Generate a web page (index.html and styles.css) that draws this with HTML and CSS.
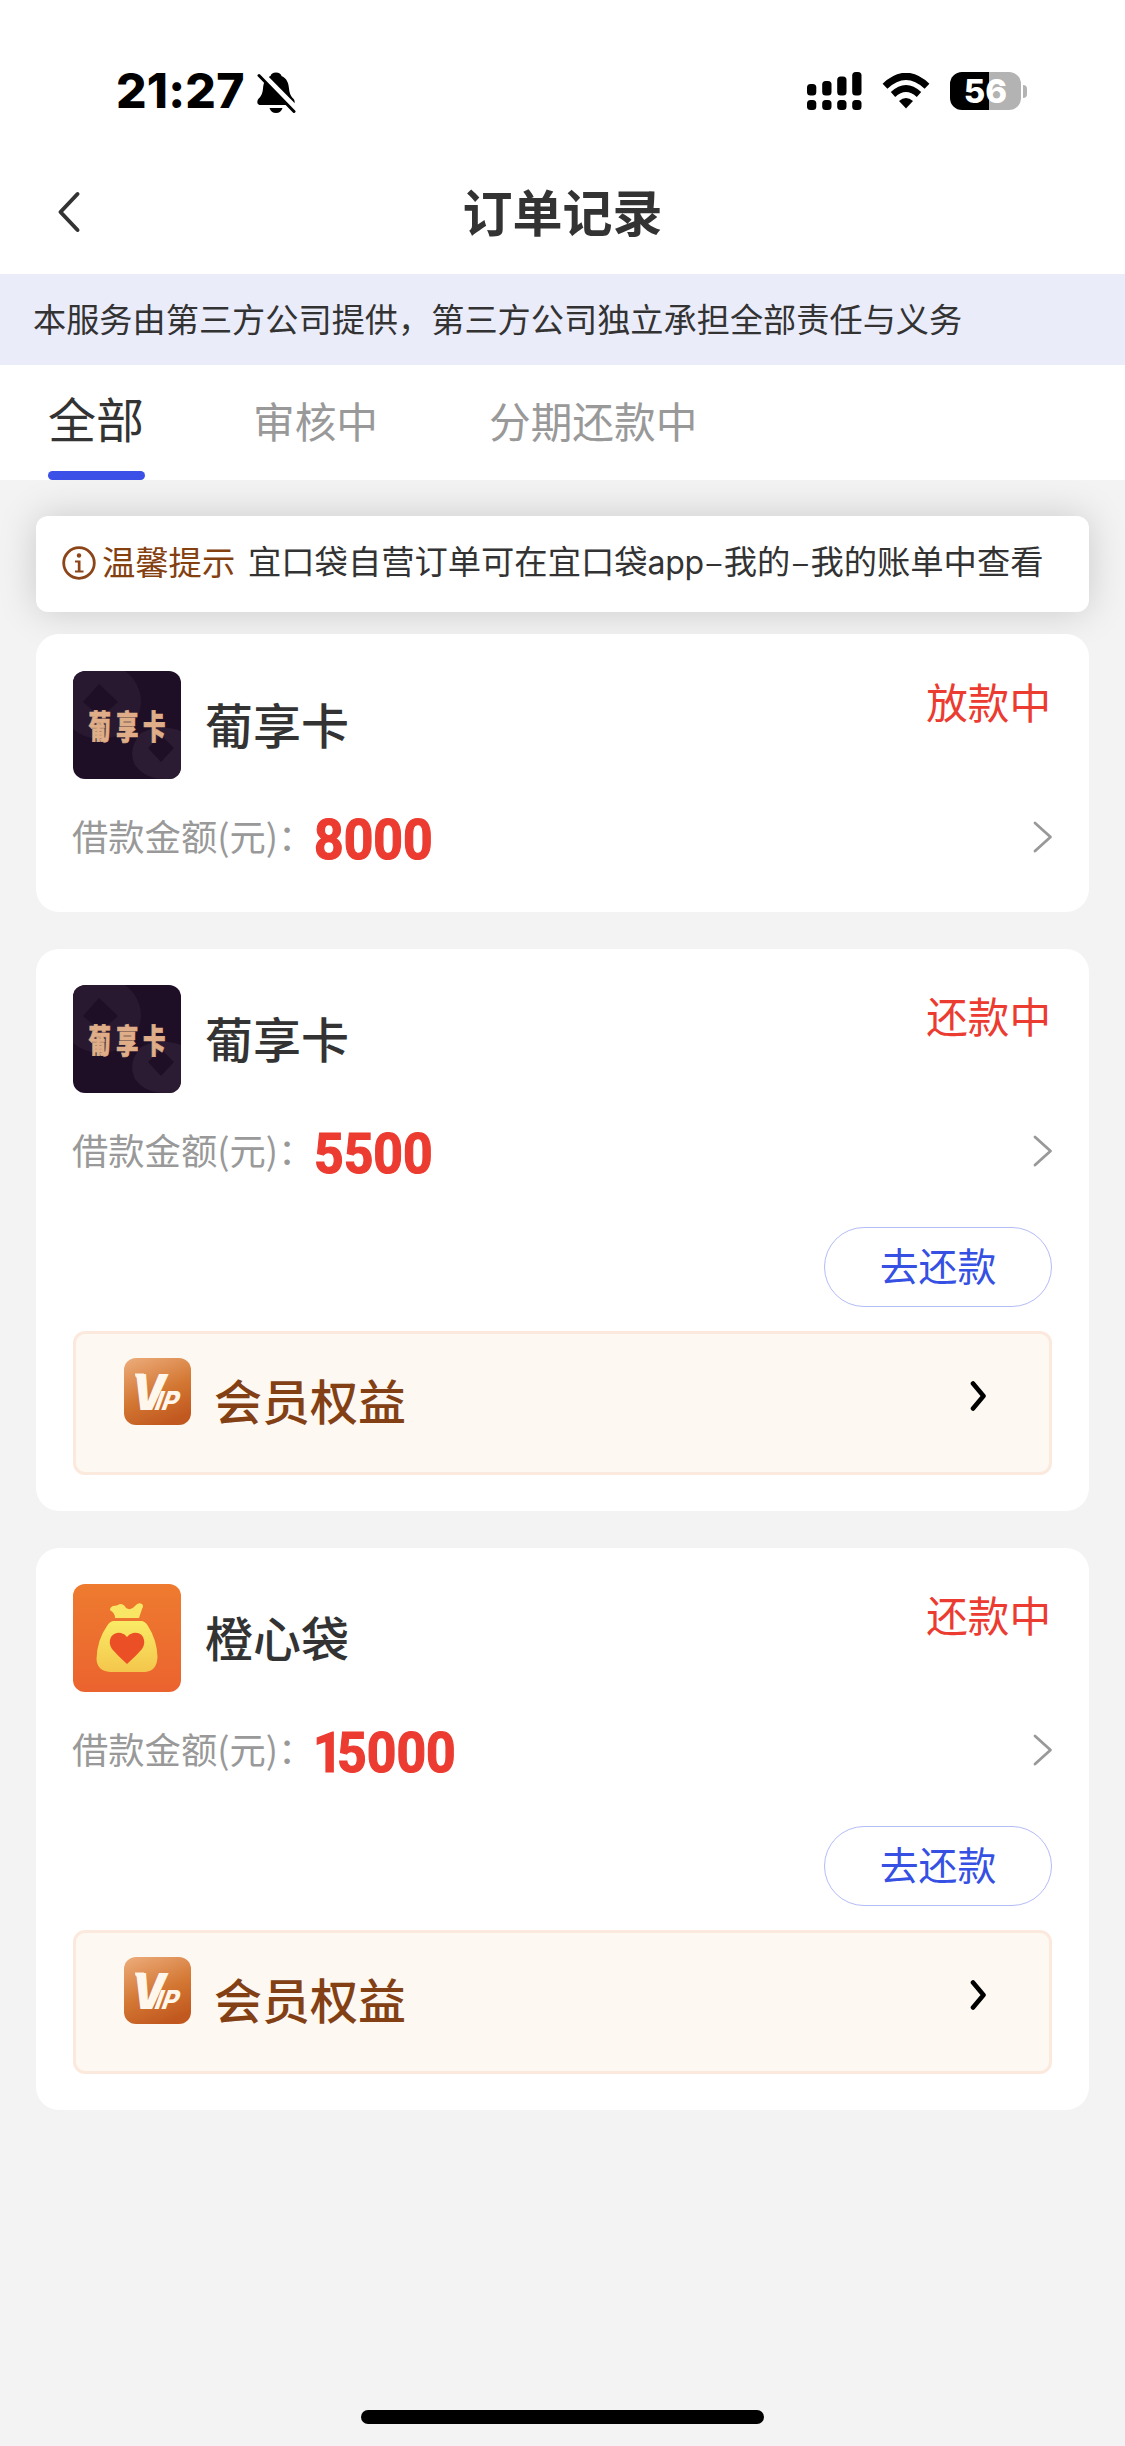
FILE: index.html
```html
<!DOCTYPE html>
<html lang="zh-CN">
<head>
<meta charset="utf-8">
<title>订单记录</title>
<link rel="stylesheet" href="styles.css">
</head>
<body>
<svg class="defs" width="0" height="0" aria-hidden="true">
  <defs>
    <linearGradient id="vipFill" x1="0.2" y1="0" x2="0.6" y2="1">
      <stop offset="0" stop-color="#eaa774"/>
      <stop offset="0.55" stop-color="#d37733"/>
      <stop offset="1" stop-color="#c1581f"/>
    </linearGradient>
    <linearGradient id="orangeFill" x1="0" y1="0" x2="0" y2="1">
      <stop offset="0" stop-color="#ee7b2f"/>
      <stop offset="1" stop-color="#eb632f"/>
    </linearGradient>
    <linearGradient id="goldFill" x1="0" y1="0" x2="0" y2="1">
      <stop offset="0" stop-color="#f9eb66"/>
      <stop offset="1" stop-color="#f4c64c"/>
    </linearGradient>
  </defs>
  <symbol id="logo-card" viewBox="0 0 108 108">
    <rect width="108" height="108" fill="#1e0f26"/>
    <path d="M0 4Q28 -8 52 0Q68 12 68 32Q66 58 40 66Q16 72 0 58Z" fill="#281930"/>
    <path d="M26 13L45 31L28 46L10 31Z" fill="#1e0f26"/>
    <path d="M108 60Q86 52 68 62Q54 78 62 94Q72 108 92 108H108Z" fill="#2b1c33"/>
    <path d="M88 64L101 77L88 91L75 77Z" fill="#1e0f26"/>
  </symbol>
  <symbol id="logo-bag" viewBox="0 0 108 108">
    <rect width="108" height="108" fill="url(#orangeFill)"/>
    <path d="M37 26Q37 23 40 22Q44 22 47 20Q51 20 53 24Q58 27 62 22Q65 18 69 20Q71 22 69 25L66 34H42Q42 29 37 26Z" fill="#f8e664"/>
    <path d="M41 37H68Q72 37 75 42Q84 56 84.500 73Q84 87 72 88H37Q24 87 23.500 75Q24 56 34 42Q37 37 41 37Z" fill="url(#goldFill)"/>
    <path d="M54 80Q45 72 39 65Q35 59 38 53Q42 48 48 49Q52 50 54 53Q56 50 60 49Q67 48 70 53Q73 59 69 65Q63 72 54 80Z" fill="#ea4f25"/>
  </symbol>
  <symbol id="chevron" viewBox="0 0 20 32">
    <path d="M2 2L17.500 16L2 30" fill="none" stroke="#999" stroke-width="2.800" stroke-linecap="round" stroke-linejoin="round"/>
  </symbol>
  <symbol id="chevron-bold" viewBox="0 0 18 32">
    <path d="M3 3.500L13.500 16L3 28.500" fill="none" stroke="#000" stroke-width="4.600" stroke-linecap="round" stroke-linejoin="round"/>
  </symbol>
</svg>

<header class="status-bar">
  <div class="status-left">
    <span class="time">21:27</span>
    <svg class="bell" viewBox="0 0 40 42">
      <path d="M20 1.500C23 1.500 25 3 25.500 5C31 7.500 32.500 12 33 17.500C33.500 24 36 26 38 28.500C39.500 31.500 38.500 34 35.500 34H4.500C1.500 34 .5 31.500 2 28.500C4 26 6.500 24 7 17.500C7.500 12 9 7.500 14.500 5C15 3 17 1.500 20 1.500Z"/>
      <path d="M13.500 37H26.500Q25 42 20 42Q15 42 13.500 37Z"/>
      <path d="M2 0L40 38.500" stroke="#fff" stroke-width="7"/>
      <path d="M3 4.500L38 40.500" stroke="#000" stroke-width="3" stroke-linecap="round"/>
    </svg>
  </div>
  <div class="status-right">
    <svg class="signal" viewBox="0 0 55 38">
      <rect x="0" y="12" width="9.300" height="11.500" rx="3.500"/><rect x="15.200" y="9" width="9.300" height="14.500" rx="3.500"/><rect x="30.200" y="4.500" width="9.300" height="19" rx="3.500"/><rect x="45.200" y="0" width="9.300" height="23.500" rx="3.500"/>
      <rect x="0" y="28" width="9.300" height="10" rx="3.500"/><rect x="15.200" y="28" width="9.300" height="10" rx="3.500"/><rect x="30.200" y="28" width="9.300" height="10" rx="3.500"/><rect x="45.200" y="28" width="9.300" height="10" rx="3.500"/>
    </svg>
    <svg class="wifi" viewBox="0 0 48 36">
      <path d="M3 13.200Q24 -6.500 45 13.200" fill="none" stroke="#000" stroke-width="7"/>
      <path d="M11 21.500Q24 9.500 37 21.500" fill="none" stroke="#000" stroke-width="6.500"/>
      <path d="M17 28Q24 22 31 28L24 35.500Z"/>
    </svg>
    <div class="battery"><span class="battery-body">56</span><span class="battery-cap"></span></div>
  </div>
</header>

<nav class="nav">
  <svg class="back" viewBox="0 0 24 42"><path d="M20.500 3L3.500 21L20.500 39" fill="none" stroke="#333" stroke-width="4" stroke-linecap="round" stroke-linejoin="round"/></svg>
  <h1 class="title">订单记录</h1>
</nav>

<div class="notice">本服务由第三方公司提供，第三方公司独立承担全部责任与义务</div>

<div class="tabs">
  <div class="tab tab-active">全部</div>
  <div class="tab tab-review">审核中</div>
  <div class="tab">分期还款中</div>
</div>

<main class="content">
  <div class="tip">
    <svg class="info" viewBox="0 0 34 34"><circle cx="17" cy="17" r="15.300" fill="none" stroke="#8c4518" stroke-width="2.800"/><circle cx="17" cy="9.500" r="2.200" fill="#8c4518"/><path d="M13 14.500H18.500V24.500H21.500V26.500H13V24.500H15.800V16.500H13Z" fill="#8c4518"/></svg>
    <span class="tip-label">温馨提示</span>
    <span class="tip-text">宜口袋自营订单可在宜口袋<span class="latin">app</span><span class="dash">–</span>我的<span class="dash">–</span>我的账单中查看</span>
  </div>

  <section class="card">
    <div class="card-head">
      <svg class="logo" viewBox="0 0 108 108"><use href="#logo-card"/><g class="logo-text" transform="scale(1 1.45)"><text x="15.500" y="47">葡</text><text x="43" y="47">享</text><text x="70" y="47">卡</text></g></svg>
      <h2 class="name">葡享卡</h2>
      <span class="state">放款中</span>
    </div>
    <div class="amount-row">
      <span class="label">借款金额(元)：</span><span class="amount">8000</span>
      <svg class="chevron"><use href="#chevron"/></svg>
    </div>
  </section>

  <section class="card card-tall">
    <div class="card-head">
      <svg class="logo" viewBox="0 0 108 108"><use href="#logo-card"/><g class="logo-text" transform="scale(1 1.45)"><text x="15.500" y="47">葡</text><text x="43" y="47">享</text><text x="70" y="47">卡</text></g></svg>
      <h2 class="name">葡享卡</h2>
      <span class="state">还款中</span>
    </div>
    <div class="amount-row">
      <span class="label">借款金额(元)：</span><span class="amount">5500</span>
      <svg class="chevron"><use href="#chevron"/></svg>
    </div>
    <div class="repay">去还款</div>
    <div class="benefit">
      <svg class="vip" viewBox="0 0 67 67"><rect width="67" height="67" rx="12" fill="url(#vipFill)"/><path d="M11 15.500H20V19.500H13Q11 19.500 11 15.500Z" fill="#fff6ec"/><text class="vip-v" transform="translate(5 51.500) skewX(-10) scale(.87 1)">V</text><text class="vip-ip" transform="translate(29 51.500) skewX(-20) scale(.95 1)">IP</text></svg>
      <span class="benefit-text">会员权益</span>
      <svg class="chevron-bold"><use href="#chevron-bold"/></svg>
    </div>
  </section>

  <section class="card card-tall">
    <div class="card-head">
      <svg class="logo"><use href="#logo-bag"/></svg>
      <h2 class="name">橙心袋</h2>
      <span class="state">还款中</span>
    </div>
    <div class="amount-row">
      <span class="label">借款金额(元)：</span><span class="amount"><span class="lead-one">1</span>5000</span>
      <svg class="chevron"><use href="#chevron"/></svg>
    </div>
    <div class="repay">去还款</div>
    <div class="benefit">
      <svg class="vip" viewBox="0 0 67 67"><rect width="67" height="67" rx="12" fill="url(#vipFill)"/><path d="M11 15.500H20V19.500H13Q11 19.500 11 15.500Z" fill="#fff6ec"/><text class="vip-v" transform="translate(5 51.500) skewX(-10) scale(.87 1)">V</text><text class="vip-ip" transform="translate(29 51.500) skewX(-20) scale(.95 1)">IP</text></svg>
      <span class="benefit-text">会员权益</span>
      <svg class="chevron-bold"><use href="#chevron-bold"/></svg>
    </div>
  </section>
</main>
<footer class="home"><span class="home-bar"></span></footer>
</body>
</html>
```
FILE: styles.css
```css
* { box-sizing: border-box; }

body {
  margin: 0;
  width: 1125px;
  height: 2446px;
  display: flex;
  flex-direction: column;
  overflow: hidden;
  background: #f3f3f3;
  color: #333;
  font-family: "Noto Sans CJK SC", sans-serif;
  white-space: nowrap;
}

svg { display: block; flex: none; }
.defs { position: absolute; }

/* status bar */
.status-bar {
  height: 150px;
  padding: 70px 98px 0 116px;
  display: flex;
  justify-content: space-between;
  background: #fff;
}
.status-left { display: flex; }
.time {
  width: 140px;
  height: 42px;
  line-height: 42px;
  font-family: Inter, sans-serif;
  font-weight: 800;
  font-size: 48px;
  letter-spacing: 0.200px;
  color: #000;
}
.bell { width: 40px; height: 42px; margin-top: 1px; }
.status-right { display: flex; margin-top: 2px; height: 38px; }
.signal { width: 55px; height: 38px; margin-right: 20px; }
.wifi { width: 48px; height: 36px; margin: 1px 20px 0 0; }
.battery { display: flex; align-items: center; gap: 2px; }
.battery-body {
  width: 71px;
  height: 38px;
  border-radius: 12px;
  background: linear-gradient(90deg, #000 39px, #b3b3b3 39px);
  color: #fff;
  font: 800 33px/38px Inter, sans-serif;
  text-align: center;
}
.battery-cap { width: 4px; height: 13px; border-radius: 0 4px 4px 0; background: #b3b3b3; }

/* title bar */
.nav {
  height: 124px;
  display: grid;
  grid-template-columns: 100px 1fr 100px;
  background: #fff;
}
.back { width: 24px; height: 42px; margin: 41px 0 0 57px; }
.title {
  margin: 20px 0 0;
  text-align: center;
  font-size: 50px;
  line-height: 80px;
  font-weight: 700;
}

.notice {
  height: 91px;
  padding-left: 33px;
  background: #ebecfa;
  font-size: 33.200px;
  line-height: 88px;
}

/* tabs */
.tabs {
  height: 115px;
  padding-left: 48px;
  display: flex;
  background: #fff;
  position: relative;
  z-index: 1;
}
.tab { font-size: 41.700px; line-height: 110px; color: #999; }
.tab-active {
  width: 97px;
  margin-right: 108px;
  font-size: 48px;
  line-height: 104px;
  color: #333;
}
.tab-active::after {
  content: "";
  display: block;
  height: 9px;
  margin-top: 2px;
  border-radius: 5px;
  background: #3b50e6;
}
.tab-review { width: 236px; }

.content { flex: 1; padding: 36px 36px 0; }

.tip {
  height: 96px;
  padding-left: 26px;
  display: flex;
  align-items: center;
  background: #fff;
  border-radius: 12px;
  box-shadow: 0 0 38px rgba(0, 0, 0, 0.17);
  font-size: 33.300px;
  line-height: 92px;
}
.info { width: 34px; height: 34px; margin: -2px 6px 0 0; }
.tip-label { color: #84400f; width: 146px; margin-top: -6px; }
.tip-text { margin-top: -5px; }
.latin { font-family: Inter, sans-serif; font-size: 32px; letter-spacing: -0.300px; }
.dash { display: inline-block; width: 20px; text-align: center; }

/* order cards */
.card {
  position: relative;
  height: 278px;
  margin-top: 22px;
  padding: 37px 37px 0;
  background: #fff;
  border-radius: 23px;
}
.card-tall { height: 562px; margin-top: 37px; padding-top: 36px; }
.card-head { display: flex; align-items: flex-start; height: 108px; }
.logo { width: 108px; height: 108px; border-radius: 12px; }
.logo-text {
  font-family: "Noto Sans CJK SC", sans-serif;
  font-weight: 900;
  font-size: 22.500px;
  fill: #dfae88;
  stroke: #dfae88;
  stroke-width: 0.500px;
}
.name { margin: 0 0 0 24px; font-size: 48px; line-height: 104px; font-weight: 500; }
.state { margin-left: auto; padding-right: 1px; color: #ec3b30; font-size: 41.600px; line-height: 60px; }

.amount-row { display: flex; align-items: center; height: 60px; margin-top: 28px; }
.label { width: 242px; margin: -4px 0 0 -1px; font-size: 36.300px; line-height: 56px; color: #999; }
.amount {
  font: 700 55px/60px Roboto, sans-serif;
  color: #ec3b30;
  -webkit-text-stroke: 1.200px #ec3b30;
  transform: scaleX(0.94);
  transform-origin: left;
  margin-top: 6px;
}
.lead-one { letter-spacing: -6px; margin-left: -1px; }
.chevron { width: 20px; height: 32px; margin: 0 -1px 0 auto; }

.repay {
  width: 228px;
  height: 80px;
  margin: 46px 0 0 auto;
  border: 1px solid #b4bcf8;
  border-radius: 40px;
  color: #3550e2;
  font-size: 38.900px;
  line-height: 73px;
  text-align: center;
}
.benefit {
  height: 144px;
  margin-top: 24px;
  padding: 24px 61px 0 48px;
  display: flex;
  align-items: flex-start;
  background: #fdf8f1;
  border: 3px solid #fce9dd;
  border-radius: 12px;
}
.vip { width: 67px; height: 67px; }
.vip-v { font: 900 49.500px Inter, sans-serif; fill: #fff6ec; }
.vip-ip { font: 800 26px Inter, sans-serif; fill: #fff6ec; }
.benefit-text { margin-left: 23px; font-size: 48px; line-height: 83px; font-weight: 500; color: #834015; }
.chevron-bold { width: 18px; height: 32px; margin: 22px 0 0 auto; }

.home { height: 36px; display: flex; justify-content: center; }
.home-bar { width: 403px; height: 14px; border-radius: 7px; background: #000; }
```
